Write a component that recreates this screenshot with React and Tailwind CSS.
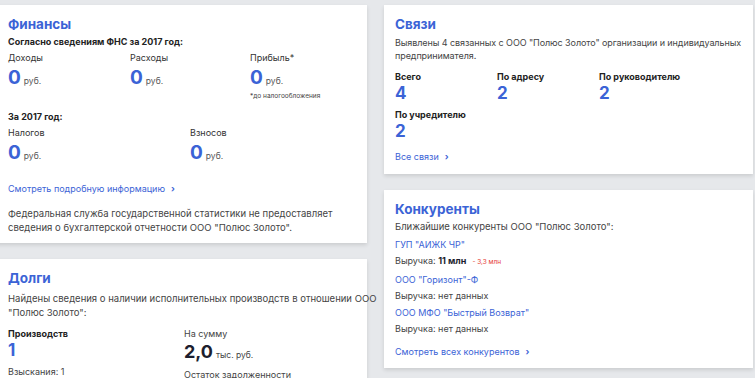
const BLUE = 'text-[#3b63d6]'

function Card({ title, className = '', children }) {
  return (
    <div className={`shrink-0 bg-white shadow-[0_2px_4px_rgba(0,0,0,0.12)] px-[11px] pt-[9px] ${className}`}>
      <h2 className={`text-[13.5px] font-bold leading-[20px] ${BLUE}`}>{title}</h2>
      {children}
    </div>
  )
}

function Money({ label, note }) {
  return (
    <div>
      <div className="text-[9px] leading-[13px] text-[#333]">{label}</div>
      <div className="mt-[3px] flex items-baseline gap-[3px]">
        <span className={`text-[19px] font-bold leading-[22px] ${BLUE}`}>0</span>
        <span className="text-[8.5px] text-[#555]">руб.</span>
      </div>
      {note && <div className="mt-[2px] text-[6.5px] leading-[10px] text-[#444]">{note}</div>}
    </div>
  )
}

function More({ children }) {
  return (
    <div className={`flex items-center gap-[6px] text-[9px] leading-[13px] ${BLUE}`}>
      {children}
      <span className="text-[9px] font-bold">›</span>
    </div>
  )
}

function Stat({ label, value }) {
  return (
    <div className="w-[102px]">
      <div className="text-[9px] font-bold leading-[13px] text-[#222]">{label}</div>
      <div className={`text-[17px] font-bold leading-[21px] ${BLUE}`}>{value}</div>
    </div>
  )
}

function Rival({ name, children }) {
  return (
    <div>
      <div className={`text-[9px] leading-[13px] ${BLUE}`}>{name}</div>
      <div className="mt-[3px] flex items-baseline text-[9px] leading-[13px] text-[#444]">{children}</div>
    </div>
  )
}

export default function App() {
  return (
    <div className="flex h-[378px] w-[755px] gap-[17px] overflow-hidden bg-[#e6e8eb] pt-[5px] font-['Inter',sans-serif]">
      <div className="-ml-[4px] flex w-[371px] shrink-0 flex-col gap-[16px]">
        <Card title="Финансы" className="h-[238px] pl-[12px]">
          <div className="mt-[1px] text-[9px] font-bold leading-[13px] text-[#222]">
            Согласно сведениям ФНС за 2017 год:
          </div>
          <div className="mt-[3px] flex">
            <div className="w-[122px]"><Money label="Доходы" /></div>
            <div className="w-[120px]"><Money label="Расходы" /></div>
            <div><Money label="Прибыль*" note="*до налогообложения" /></div>
          </div>
          <div className="mt-[9px] text-[9px] font-bold leading-[13px] text-[#222]">За 2017 год:</div>
          <div className="mt-[3px] flex">
            <div className="w-[182px]"><Money label="Налогов" /></div>
            <div><Money label="Взносов" /></div>
          </div>
          <div className="mt-[18px]">
            <More>Смотреть подробную информацию</More>
          </div>
          <p className="mt-[12px] whitespace-nowrap text-[9.5px] leading-[14px] text-[#444]">
            Федеральная служба государственной статистики не предоставляет
            <br />
            сведения о бухгалтерской отчетности ООО "Полюс Золото".
          </p>
        </Card>
        <Card title="Долги" className="h-[130px] pl-[12px]">
          <p className="mt-[4px] whitespace-nowrap text-[9.5px] leading-[14px] text-[#444]">
            Найдены сведения о наличии исполнительных производств в отношении ООО
            <br />
            "Полюс Золото":
          </p>
          <div className="mt-[7px] flex">
            <div className="w-[176px]">
              <div className="text-[9px] font-bold leading-[13px] text-[#222]">Производств</div>
              <div className={`text-[17px] font-bold leading-[20px] ${BLUE}`}>1</div>
              <div className="mt-[5px] text-[9px] leading-[13px] text-[#444]">Взыскания: 1</div>
            </div>
            <div>
              <div className="text-[9px] leading-[13px] text-[#444]">На сумму</div>
              <div className="mt-[2px] flex items-baseline gap-[3px]">
                <span className="text-[18px] font-bold leading-[20px] text-[#1c1e2e]">2,0</span>
                <span className="text-[8.5px] text-[#444]">тыс. руб.</span>
              </div>
              <div className="mt-[6px] text-[9px] leading-[13px] text-[#444]">Остаток задолженности</div>
            </div>
          </div>
        </Card>
      </div>
      <div className="flex w-[369px] shrink-0 flex-col gap-[16px]">
        <Card title="Связи" className="h-[169px]">
          <p className="mt-[2px] whitespace-nowrap text-[9px] leading-[13px] tracking-[-0.08px] text-[#444]">
            Выявлены 4 связанных с ООО "Полюс Золото" организации и индивидуальных
            <br />
            предпринимателя.
          </p>
          <div className="mt-[8px] flex flex-wrap gap-y-[4px]">
            <Stat label="Всего" value="4" />
            <Stat label="По адресу" value="2" />
            <Stat label="По руководителю" value="2" />
            <Stat label="По учредителю" value="2" />
          </div>
          <div className="mt-[8px]">
            <More>Все связи</More>
          </div>
        </Card>
        <Card title="Конкуренты" className="h-[178px] pt-[7px]">
          <p className="mt-[1px] text-[9.5px] leading-[13px] text-[#444]">
            Ближайшие конкуренты ООО "Полюс Золото":
          </p>
          <div className="mt-[5px] flex flex-col gap-[4px]">
            <Rival name={'ГУП "АИЖК ЧР"'}>
              Выручка:&nbsp;<b className="font-bold text-[#1c1e2e]">11 млн</b>
              <span className="ml-[6px] text-[6.5px] text-[#e53935]">- 3,3 млн</span>
            </Rival>
            <Rival name={'ООО "Горизонт"-Ф'}>Выручка: нет данных</Rival>
            <Rival name={'ООО МФО "Быстрый Возврат"'}>Выручка: нет данных</Rival>
          </div>
          <div className="mt-[10px]">
            <More>Смотреть всех конкурентов</More>
          </div>
        </Card>
      </div>
    </div>
  )
}
